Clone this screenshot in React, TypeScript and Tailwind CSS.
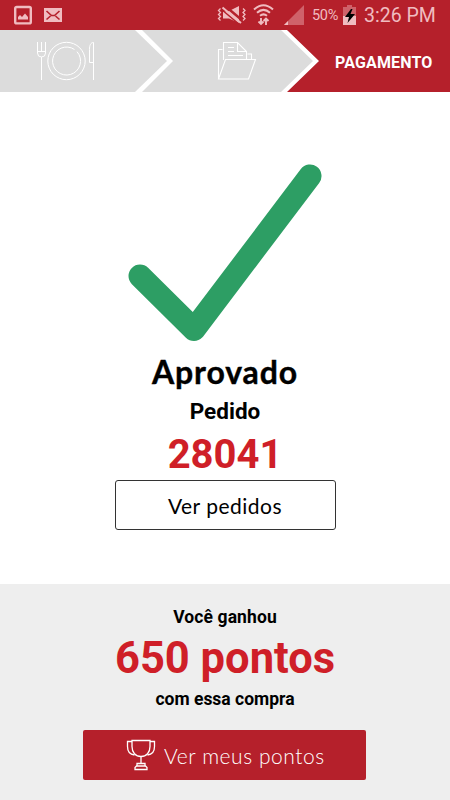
import React from 'react';

const StatusBar: React.FC = () => {
  return (
    <div className="h-[30px] bg-[#b5202b] flex items-center text-[#f0bcc0] font-['Roboto',sans-serif]">
      {/* Notifications */}
      <svg className="ml-[14px]" width="18" height="20" viewBox="0 0 18 20" fill="none">
        <rect x="1.2" y="2" width="15.6" height="16.4" rx="1.5" stroke="currentColor" strokeWidth="2.4" />
        <path d="M4 14.5v-2.5l2-2 2 2 3-3.500 3 3.500v2.500z" fill="currentColor" />
      </svg>
      <svg className="ml-3" width="18" height="16" viewBox="0 0 18 16">
        <rect y="1" width="18" height="14" fill="currentColor" />
        <path d="M2.500 4l5 4.500h3l5-4.500M2.500 12.500l4-3.500M15.500 12.500l-4-3.500" stroke="#b5202b" strokeWidth="1.600" fill="none" />
      </svg>

      {/* Mute */}
      <svg className="ml-[155px]" width="30" height="20" viewBox="0 0 30 20" fill="none">
        <path d="M6 6.500h5L22 1v17L12 13.500H6z" fill="currentColor" />
        <path d="M7 0l19 16" stroke="#b5202b" strokeWidth="2.500" />
        <path d="M4 4l19 16" stroke="#b5202b" strokeWidth="1.500" />
        <path d="M5.500 2.500l18.500 15.500" stroke="currentColor" strokeWidth="2" />
        <path d="M3.500 3.500l-2 2 2 2-2 2 2 2-2 2 2 2M26 3.500l2 2-2 2 2 2-2 2 2 2-2 2" stroke="currentColor" strokeWidth="1.300" />
      </svg>

      {/* Wifi */}
      <svg className="ml-[6px]" width="21" height="24" viewBox="0 0 21 24" fill="none" stroke="currentColor">
        <path d="M1 6.500Q10.500 -2 20 6.500M4 9.700Q10.500 4 17 9.700M7 12.800Q10.500 10 14 12.800" strokeWidth="2" />
        <path d="M8 15v6M5.500 18.500l2.500 2.500 2.500-2.500M13 22v-6M10.500 18l2.500-2.500 2.500 2.500" strokeWidth="1.900" />
      </svg>

      {/* Signal */}
      <svg className="ml-[10px]" width="21" height="20" viewBox="0 0 21 20">
        <path d="M0 20L20 0v20z" fill="#cf626a" />
        <path d="M0 20l4-4v4z" fill="currentColor" />
      </svg>

      <span className="ml-[7px] w-[28px] text-[14.500px] leading-none mt-[2px] whitespace-nowrap tracking-[-0.300px]">50%</span>

      {/* Battery */}
      <svg className="ml-[3px]" width="13" height="20" viewBox="0 0 13 20">
        <path d="M4 0h5v2h4v9H0V2h4z" fill="#cf626a" />
        <path d="M0 11h13v9H0z" fill="currentColor" />
        <path d="M8 4L2 12h4l-1.500 6L12 9H7.500L9.500 4z" fill="#000" />
      </svg>
      <span className="ml-[8px] text-[19.500px] leading-none mt-[2px] whitespace-nowrap">3:26 PM</span>
    </div>
  );
};

const PlateIcon: React.FC = () => (
  <svg width="60" height="40" viewBox="0 0 60 40" fill="none" stroke="#fff" strokeWidth="1">
    <path d="M1.500 1v11a4 4 0 0 0 8 0V1M5.500 1v9M1.500 10.500h8M5.500 16v23" />
    <circle cx="30.500" cy="20" r="18.700" />
    <path d="M38.500 8.500A14 14 0 1 0 41 10.700" />
    <path d="M57.500 39V1.500c-3 0-4 3-4 7v13h4" />
  </svg>
);

const FolderIcon: React.FC = () => (
  <svg width="40" height="40" viewBox="0 0 40 40" fill="none" stroke="#fff" strokeWidth="1.100">
    <path d="M1.500 38V8.500h4M1.500 38l7-19.500h30L31.500 38zM6.500 19V1.500h14l9 9V18M20.500 1.500v9h9M30.500 13h4v5" />
    <path d="M11 6.500h6M11 10.500h6M11 14.500h15" />
  </svg>
);

const TrophyIcon: React.FC = () => (
  <svg width="30" height="32" viewBox="0 0 30 32" fill="none" stroke="#fff" strokeWidth="1.300">
    <path d="M6 1.500h18v6c0 6-3.500 10-9 10s-9-4-9-10z" />
    <path d="M6 2.500H1.500v5c0 5 2 8 7 8.500M24 2.500h4.500v5c0 5-2 8-7 8.500M15 17.500V24" />
    <path d="M11 24.500h8v2.500h-8zM10.500 27h9l1.500 1.500v2H9v-2z" />
  </svg>
);

const Steps: React.FC = () => {
  return (
    <div className="h-[62px] flex bg-white">
      <div className="w-[167px] shrink-0 bg-[#dcdcdc] flex items-center pl-[36px] [clip-path:polygon(0_0,135px_0,167px_50%,135px_100%,0_100%)]">
        <PlateIcon />
      </div>
      <div className="w-[171px] shrink-0 -ml-[25px] bg-[#dcdcdc] flex items-center pl-[75px] [clip-path:polygon(0_0,139px_0,171px_50%,139px_100%,0_100%,31px_50%)]">
        <FolderIcon />
      </div>
      <div className="w-[163px] shrink-0 -ml-[26px] bg-[#b5202b] flex items-center pl-[48px] pt-[3px] [clip-path:polygon(0_0,100%_0,100%_100%,0_100%,32px_50%)]">
        <span className="font-['Roboto',sans-serif] font-bold text-base tracking-[0.150px] text-white">PAGAMENTO</span>
      </div>
    </div>
  );
};

const App: React.FC = () => {
  return (
    <div className="w-[450px] h-[800px] overflow-hidden bg-white text-black flex flex-col font-['Roboto',sans-serif]">
      <StatusBar />
      <Steps />

      {/* Order result */}
      <main className="h-[492px] shrink-0 flex flex-col items-center pt-[70px]">
        <svg width="196" height="182" viewBox="0 0 196 182" fill="none">
          <path d="M13 114L67 167.500L183 14" stroke="#2d9e64" strokeWidth="23" strokeLinecap="round" strokeLinejoin="round" />
        </svg>
        <h1 className="mt-[9px] h-[38px] leading-[38px] font-['Lato',sans-serif] font-bold text-[32px] tracking-[0.900px] [-webkit-text-stroke:0.400px_#000]">Aprovado</h1>
        <h2 className="mt-[2px] h-[36px] leading-[36px] font-bold text-[22.500px]">Pedido</h2>
        <p className="h-[48px] leading-[48px] mt-[2px] font-bold text-[40px] text-[#cf1f28]">28041</p>
        <button className="mt-px w-[221px] h-[50px] shrink-0 border border-[#333] rounded-[3px] pt-[2px] font-['Lato',sans-serif] text-[21px] tracking-[0.500px]">
          Ver pedidos
        </button>
      </main>

      {/* Earned points */}
      <section className="flex-1 bg-[#eee] flex flex-col items-center pt-[22px]">
        <p className="h-[22px] leading-[22px] font-bold text-[17.500px] tracking-[0.100px]">Você ganhou</p>
        <p className="h-[52px] leading-[52px] mt-[5px] font-bold text-[43.500px] text-[#cf1f28]">650 pontos</p>
        <p className="h-[22px] leading-[22px] mt-[3px] font-bold text-[17.500px]">com essa compra</p>
        <button className="mt-[20px] mr-px w-[283px] h-[50px] shrink-0 rounded-[2px] bg-[#b5202b] text-white flex items-center pl-[43px] font-['Lato',sans-serif] font-light text-[21px] tracking-[0.550px]">
          <TrophyIcon />
          <span className="ml-[8px] pt-[2px]">Ver meus pontos</span>
        </button>
      </section>
    </div>
  );
};

export default App;
